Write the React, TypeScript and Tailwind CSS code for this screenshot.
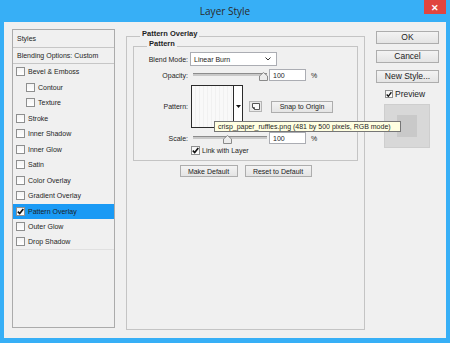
import type { ReactNode } from "react";

type StyleRow = { label: string; sub?: boolean; checked?: boolean; active?: boolean };

const STYLE_ROWS: StyleRow[] = [
  { label: "Bevel & Emboss" },
  { label: "Contour", sub: true },
  { label: "Texture", sub: true },
  { label: "Stroke" },
  { label: "Inner Shadow" },
  { label: "Inner Glow" },
  { label: "Satin" },
  { label: "Color Overlay" },
  { label: "Gradient Overlay" },
  { label: "Pattern Overlay", checked: true, active: true },
  { label: "Outer Glow" },
  { label: "Drop Shadow" },
];

function Check({ checked, size = "w-[9px] h-[9px]" }: { checked?: boolean; size?: string }) {
  return (
    <span
      className={`${size} shrink-0 border border-[#8e8f8f] bg-[linear-gradient(#f4f4f4,#ffffff)] flex items-center justify-center`}
    >
      {checked && (
        <svg width="7" height="7" viewBox="0 0 7 7" aria-hidden>
          <polyline points="0.8,3.6 2.7,5.6 6.3,0.9" fill="none" stroke="#111" strokeWidth="1.6" />
        </svg>
      )}
    </span>
  );
}

function Button({ children, className = "" }: { children: ReactNode; className?: string }) {
  return (
    <div
      className={`flex items-center justify-center border border-[#adadad] bg-[linear-gradient(#f3f3f3,#e4e4e4)] text-[#222] ${className}`}
    >
      {children}
    </div>
  );
}

function Slider({ thumb }: { thumb: number }) {
  return (
    <div className="relative ml-[2px] w-[79px] h-[12px]">
      <div className="absolute left-[3px] top-[4px] w-[74px] h-[3px] border-t border-[#8c8c8c] bg-[#c9c9c9]" />
      <svg
        className="absolute top-[3px]"
        style={{ left: thumb }}
        width="9"
        height="9"
        viewBox="0 0 9 9"
        aria-hidden
      >
        <polygon points="4.5,0.5 8.5,4 8.5,8.5 0.5,8.5 0.5,4" fill="#ececec" stroke="#8a8a8a" />
      </svg>
    </div>
  );
}

function NumberBox({ value }: { value: string }) {
  return (
    <>
      <div className="w-[37px] h-[12px] border border-[#abadb3] bg-white flex items-center pl-[3px]">{value}</div>
      <span className="ml-[5px]">%</span>
    </>
  );
}

function Label({ children }: { children: ReactNode }) {
  return <span className="w-[54px] shrink-0 text-right">{children}</span>;
}

export default function App() {
  return (
    <div className="relative w-[450px] h-[343px] bg-[#37aff6] flex flex-col overflow-hidden font-['Liberation_Sans',Arial,sans-serif] text-[7px] leading-none text-[#1e1e1e]">
      {/* title bar */}
      <div className="relative h-[22px] flex items-center justify-center font-['Open_Sans',sans-serif] text-[10px] text-[#2a2a2a]">
        Layer Style
        <div className="absolute right-[4px] top-0 w-[22px] h-[14px] bg-[#e0453f] flex items-center justify-center text-white text-[9px] font-bold">
          ✕
        </div>
      </div>

      <div className="mx-[4px] h-[316px] bg-[#f0f0f0] flex pt-[7px] pl-[8px]">
        {/* styles list */}
        <div className="w-[103px] h-[299px] shrink-0 border border-[#ababab] flex flex-col">
          <div className="h-[18px] border-b border-[#c6c6c6] flex items-center pl-[4px]">Styles</div>
          <div className="h-[16px] border-b border-[#c6c6c6] flex items-center pl-[4px]">Blending Options: Custom</div>
          {STYLE_ROWS.map((r, i) => (
            <div
              key={r.label}
              className={`h-[15.5px] flex items-center gap-[3px] ${r.sub ? "pl-[13px]" : "pl-[3px]"} ${
                r.active ? "bg-[#1a9af5]" : ""
              } ${i === STYLE_ROWS.length - 1 ? "border-b border-[#e0e0e0]" : ""}`}
            >
              <Check checked={r.checked} />
              <span>{r.label}</span>
            </div>
          ))}
        </div>

        {/* pattern overlay group */}
        <fieldset className="ml-[11px] w-[239px] h-[301px] shrink-0 border border-[#c4c4c4] px-[6px]">
          <legend className="ml-[7px] px-[2px] pb-[4px] font-bold text-[7.5px] leading-[10px]">Pattern Overlay</legend>
          <fieldset className="-mt-[4px] border border-[#c4c4c4] pb-[5px]">
            <legend className="ml-[13px] px-[2px] pb-[4px] font-bold text-[7.5px] leading-[10px]">Pattern</legend>

            <div className="-mt-[1px] h-[14px] flex items-center">
              <Label>Blend Mode:</Label>
              <div className="ml-[2px] w-[87px] h-[14px] border border-[#abadb3] bg-white flex items-center justify-between pl-[3px] pr-[5px]">
                <span>Linear Burn</span>
                <svg width="6" height="4" viewBox="0 0 6 4" aria-hidden>
                  <polyline points="0.5,0.5 3,3 5.5,0.5" fill="none" stroke="#333" strokeWidth="1" />
                </svg>
              </div>
            </div>

            <div className="mt-[3px] h-[12px] flex items-center">
              <Label>Opacity:</Label>
              <Slider thumb={69} />
              <NumberBox value="100" />
            </div>

            <div className="mt-[4px] h-[43px] flex items-center">
              <Label>Pattern:</Label>
              <div className="ml-[3px] w-[52px] h-[43px] flex border border-[#2b2b2b] bg-white">
                <div className="flex-1 border-r border-[#2b2b2b] bg-[repeating-linear-gradient(90deg,#f9f9f9_0px,#f9f9f9_3px,#f1f1f1_3px,#f1f1f1_4px)]" />
                <div className="w-[8px] flex items-center justify-center">
                  <svg width="5" height="3" viewBox="0 0 5 3" aria-hidden>
                    <polygon points="0,0 5,0 2.5,3" fill="#111" />
                  </svg>
                </div>
              </div>
              <div className="ml-[6px] w-[13px] h-[11px] border border-[#b5b5b5] bg-[#e9e9e9] flex items-center justify-center">
                <svg width="8" height="7" viewBox="0 0 8 7" aria-hidden>
                  <path d="M0.5 0.5 H7.5 V6.5 H2.5 L0.5 4.5 Z M0.5 4.5 H2.5 V6.5" fill="#fafafa" stroke="#555" strokeWidth="1" />
                </svg>
              </div>
              <Button className="ml-[9px] w-[62px] h-[12px]">Snap to Origin</Button>
            </div>

            <div className="mt-[4px] h-[12px] flex items-center">
              <Label>Scale:</Label>
              <Slider thumb={33} />
              <NumberBox value="100" />
            </div>

            <div className="mt-[2px] h-[9px] flex items-center pl-[57px]">
              <Check checked />
              <span className="ml-[2px]">Link with Layer</span>
            </div>
          </fieldset>

          <div className="mt-[4px] flex justify-center gap-[7px]">
            <Button className="w-[58px] h-[12px]">Make Default</Button>
            <Button className="w-[67px] h-[12px]">Reset to Default</Button>
          </div>
        </fieldset>

        {/* right column */}
        <div className="ml-[11px] w-[63px] flex flex-col text-[8.5px]">
          <Button className="mt-[2px] h-[13px] border-[#3c80c4]">OK</Button>
          <Button className="mt-[6px] h-[13px]">Cancel</Button>
          <Button className="mt-[7px] h-[13px]">New Style...</Button>
          <div className="mt-[7px] h-[8px] flex items-center pl-[9px]">
            <Check checked size="w-[8px] h-[8px]" />
            <span className="ml-[2px]">Preview</span>
          </div>
          <div className="mt-[6px] ml-[8px] w-[46px] h-[44px] bg-[#d8d8d8] border border-[#cecece] flex items-center justify-center">
            <div className="w-[20px] h-[22px] bg-[#c9c9c9]" />
          </div>
        </div>
      </div>

      {/* tooltip over the pattern picker */}
      <div className="absolute left-[214px] top-[121px] w-[187px] h-[11px] border border-[#767676] bg-[#ffffe1] flex items-center pl-[3px] text-[7px] whitespace-nowrap">
        crisp_paper_ruffles.png (481 by 500 pixels, RGB mode)
      </div>
    </div>
  );
}
